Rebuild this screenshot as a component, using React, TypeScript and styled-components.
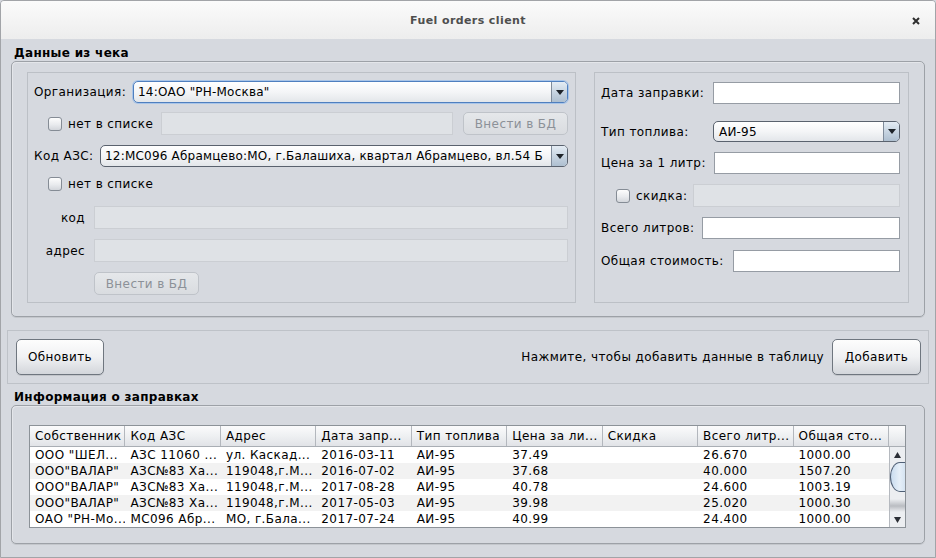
import React from 'react';
import styled, { createGlobalStyle, css } from 'styled-components';

const Global = createGlobalStyle`
  html, body { margin: 0; padding: 0; background: #d6d9df; }
  body { font-family: "DejaVu Sans", "Noto Sans", sans-serif; font-size: 12px; color: #000; letter-spacing: 0.4px; }
  * { box-sizing: border-box; }
`;

const Window = styled.div`
  width: 936px;
  height: 558px;
  border: 1px solid #a2a4a8;
  border-radius: 4px 4px 0 0;
  background: #d6d9df;
  display: flex;
  flex-direction: column;
  overflow: hidden;
`;

const TitleBar = styled.div`
  height: 38px;
  flex: none;
  background: linear-gradient(#fbfbfb, #ededed);
  display: grid;
  grid-template-columns: 1fr auto 1fr;
  align-items: center;
  font: bold 11px "DejaVu Sans", sans-serif;
  letter-spacing: 0.4px;
  color: #4e4e4e;
`;

const TitleText = styled.div`
  grid-column: 2;
  padding-top: 1px;
`;

const CloseBox = styled.div`
  grid-column: 3;
  justify-self: end;
  padding-right: 15px;
  display: flex;
  align-items: center;
  padding-top: 2px;
`;

const Body = styled.div`
  flex: 1;
  padding: 6px 6px 0 6px;
  display: flex;
  flex-direction: column;
`;

const SectionTitle = styled.div<{ $top?: number }>`
  height: 16px;
  line-height: 16px;
  padding-left: 7px;
  margin-top: ${p => p.$top ?? 0}px;
  font-weight: bold;
  font-size: 12px;
  letter-spacing: 0.3px;
`;

const TitledBox = styled.div<{ $pad: string; $h: number }>`
  margin: 0 4px;
  height: ${p => p.$h}px;
  border: 1px solid #9da1a7;
  border-radius: 5px;
  box-shadow: inset 1px 1px 0 #e4e6ea, 0 1px 0 #c4c7cc;
  padding: ${p => p.$pad};
  display: flex;
`;

const Panel = styled.div<{ $w: number; $pad: string }>`
  width: ${p => p.$w}px;
  flex: none;
  height: 231px;
  border: 1px solid #bcc0c6;
  padding: ${p => p.$pad};
  display: flex;
  flex-direction: column;
`;

const Spacer = styled.div<{ $w: number }>`
  width: ${p => p.$w}px;
  flex: none;
`;

const Row = styled.div<{ $h: number; $gap?: number; $indent?: number }>`
  height: ${p => p.$h}px;
  margin-top: ${p => p.$gap ?? 0}px;
  margin-left: ${p => p.$indent ?? 0}px;
  display: flex;
  align-items: center;
  flex: none;
`;

const Label = styled.div<{ $w: number; $right?: boolean }>`
  width: ${p => p.$w}px;
  flex: none;
  white-space: nowrap;
  text-align: ${p => (p.$right ? 'right' : 'left')};
  padding-right: ${p => (p.$right ? 9 : 0)}px;
`;

const CheckArea = styled.label<{ $w: number; $lead?: number }>`
  width: ${p => p.$w}px;
  padding-left: ${p => p.$lead ?? 0}px;
  flex: none;
  display: flex;
  align-items: center;
  gap: 6px;
  white-space: nowrap;
`;

const CheckBox = styled.span`
  width: 14px;
  height: 14px;
  flex: none;
  border: 1px solid #858c95;
  border-radius: 3px;
  background: linear-gradient(#fdfdfd, #e9ebee 55%, #d3d6db);
`;

const Field = styled.input`
  flex: 1;
  min-width: 0;
  height: 100%;
  margin: 0;
  padding: 0 4px;
  font: 12px "DejaVu Sans", sans-serif;
  background: #fff;
  border: 1px solid #969ca4;
  border-radius: 0;
  outline: none;
  &:disabled {
    background: #dfe2e6;
    border-color: #cbced3;
  }
`;

const Combo = styled.div<{ $focused?: boolean }>`
  flex: 1;
  min-width: 0;
  height: 100%;
  display: flex;
  border: 1px solid #5a626e;
  border-radius: 5px;
  overflow: hidden;
  background: linear-gradient(#ffffff, #f4f5f7 50%, #e3e6ea);
  ${p =>
    p.$focused &&
    css`
      border-color: #4f7fbf;
      box-shadow: 0 0 0 1px #a9c5e8;
    `}
`;

const ComboText = styled.div<{ $pad: number }>`
  flex: 1;
  min-width: 0;
  padding-left: ${p => p.$pad}px;
  display: flex;
  align-items: center;
  white-space: nowrap;
  overflow: hidden;
  letter-spacing: 0.2px;
`;

const ComboArrow = styled.div`
  width: 16px;
  flex: none;
  border-left: 1px solid #7f8b9a;
  background: linear-gradient(#e4ecf4, #c8d5e2 50%, #aebfd0);
  display: flex;
  align-items: center;
  justify-content: center;
`;

const Button = styled.button<{ $w: number; $h: number }>`
  width: ${p => p.$w}px;
  height: ${p => p.$h}px;
  flex: none;
  margin: 0;
  padding: 0;
  font: 12px "DejaVu Sans", sans-serif;
  letter-spacing: 0.4px;
  color: #000;
  border: 1px solid #6f767f;
  border-radius: 5px;
  background: linear-gradient(#fdfdfd, #f0f1f3 50%, #d3d6db);
  box-shadow: 0 1px 0 #c2c5ca;
  &:disabled {
    color: #8c9198;
    border-color: #bfc3c9;
    background: linear-gradient(#e5e7ea, #d9dce0);
    box-shadow: none;
  }
`;

const ActionBar = styled.div`
  margin-top: 13px;
  height: 54px;
  flex: none;
  border: 1px solid #bec2c8;
  padding: 8px 7px 8px 8px;
  display: flex;
  align-items: center;
`;

const Hint = styled.div`
  margin-left: auto;
  margin-right: 8px;
  white-space: nowrap;
`;

const Table = styled.div`
  flex: 1;
  height: 103px;
  border: 1px solid #8c9298;
  display: flex;
  flex-direction: column;
  background: #fff;
`;

const HeaderRow = styled.div`
  height: 21px;
  flex: none;
  display: grid;
  grid-template-columns: repeat(9, 1fr) 16px;
  border-bottom: 1px solid #a9aeb4;
  background: linear-gradient(#fbfbfc, #eef0f2 50%, #e1e3e7);
`;

const HeadCell = styled.div`
  border-right: 1px solid #b3b7bd;
  padding-left: 5px;
  display: flex;
  align-items: center;
  white-space: nowrap;
  overflow: hidden;
  &:last-child {
    border-right: none;
  }
`;

const BodyArea = styled.div`
  flex: 1;
  display: flex;
`;

const Rows = styled.div`
  flex: 1;
  display: flex;
  flex-direction: column;
`;

const DataRow = styled.div<{ $alt: boolean }>`
  height: 16px;
  display: grid;
  grid-template-columns: repeat(9, 1fr);
  background: ${p => (p.$alt ? '#f2f2f2' : '#ffffff')};
`;

const Cell = styled.div`
  padding-left: 5px;
  line-height: 16px;
  white-space: nowrap;
  overflow: hidden;
`;

const ScrollBar = styled.div`
  width: 16px;
  flex: none;
  border-left: 1px solid #b5b9bf;
  background: #eceef1;
  display: flex;
  flex-direction: column;
  align-items: flex-end;
`;

const ScrollArrow = styled.div`
  height: 15px;
  width: 15px;
  flex: none;
  display: flex;
  align-items: center;
  justify-content: center;
`;

const Thumb = styled.div`
  width: 15px;
  height: 30px;
  flex: none;
  border: 1px solid #4f5f75;
  border-right: none;
  border-radius: 10px 0 0 10px / 15px 0 0 15px;
  background: linear-gradient(90deg, #c9dcef, #e6eff8 60%, #d5e3f1);
`;

const TrackShade = styled.div`
  width: 15px;
  flex: 1;
  background: linear-gradient(#eceef1 0%, #eceef1 35%, #b9bcc1 70%, #eceef1 100%);
`;

const Up = () => (
  <svg width="7" height="6" viewBox="0 0 7 6">
    <polygon points="3.5,0 7,6 0,6" fill="#2b2f36" />
  </svg>
);
const Down = () => (
  <svg width="7" height="6" viewBox="0 0 7 6">
    <polygon points="0,0 7,0 3.5,6" fill="#2b2f36" />
  </svg>
);
const ComboTri = () => (
  <svg width="8" height="5" viewBox="0 0 8 5">
    <polygon points="0,0 8,0 4,5" fill="#1e2329" />
  </svg>
);

const headers = [
  'Собственник',
  'Код АЗС',
  'Адрес',
  'Дата запр...',
  'Тип топлива',
  'Цена за ли...',
  'Скидка',
  'Всего литр...',
  'Общая сто...',
];

const rows = [
  ['ООО "ШЕЛ...', 'АЗС 11060 ...', 'ул. Каскад...', '2016-03-11', 'АИ-95', '37.49', '', '26.670', '1000.00'],
  ['ООО"ВАЛАР"', 'АЗС№83 Ха...', '119048,г.М...', '2016-07-02', 'АИ-95', '37.68', '', '40.000', '1507.20'],
  ['ООО"ВАЛАР"', 'АЗС№83 Ха...', '119048,г.М...', '2017-08-28', 'АИ-95', '40.78', '', '24.600', '1003.19'],
  ['ООО"ВАЛАР"', 'АЗС№83 Ха...', '119048,г.М...', '2017-05-03', 'АИ-95', '39.98', '', '25.020', '1000.30'],
  ['ОАО "РН-Мо...', 'МС096 Абр...', 'МО, г.Бала...', '2017-07-24', 'АИ-95', '40.99', '', '24.400', '1000.00'],
];

export default function App() {
  return (
    <>
      <Global />
      <Window>
        <TitleBar>
          <TitleText>Fuel orders client</TitleText>
          <CloseBox>
            <svg width="8" height="8" viewBox="0 0 8 8">
              <path d="M1 1 L7 7 M7 1 L1 7" stroke="#2e2e2e" strokeWidth="2" />
            </svg>
          </CloseBox>
        </TitleBar>
        <Body>
          <SectionTitle>Данные из чека</SectionTitle>
          <TitledBox $h={256} $pad="10px 15px 13px 15px">
            <Panel $w={549} $pad="8px 7px 0 6px">
              <Row $h={22}>
                <Label $w={99}>Организация:</Label>
                <Combo $focused>
                  <ComboText $pad={4}>14:ОАО "РН-Москва"</ComboText>
                  <ComboArrow><ComboTri /></ComboArrow>
                </Combo>
              </Row>
              <Row $h={23} $gap={9} $indent={14}>
                <CheckArea $w={113}>
                  <CheckBox />
                  нет в списке
                </CheckArea>
                <Field disabled />
                <Spacer $w={10} />
                <Button $w={105} $h={23} disabled>Внести в БД</Button>
              </Row>
              <Row $h={22} $gap={10}>
                <Label $w={66}>Код АЗС:</Label>
                <Combo>
                  <ComboText $pad={4}>12:МС096 Абрамцево:МО, г.Балашиха, квартал Абрамцево, вл.54 Б</ComboText>
                  <ComboArrow><ComboTri /></ComboArrow>
                </Combo>
              </Row>
              <Row $h={16} $gap={9} $indent={14}>
                <CheckArea $w={113}>
                  <CheckBox />
                  нет в списке
                </CheckArea>
              </Row>
              <Row $h={23} $gap={14}>
                <Label $w={60} $right>код</Label>
                <Field disabled />
              </Row>
              <Row $h={23} $gap={10}>
                <Label $w={60} $right>адрес</Label>
                <Field disabled />
              </Row>
              <Row $h={23} $gap={10} $indent={60}>
                <Button $w={105} $h={23} disabled>Внести в БД</Button>
              </Row>
            </Panel>
            <Spacer $w={18} />
            <Panel $w={315} $pad="9px 8px 0 6px">
              <Row $h={22}>
                <Label $w={112}>Дата заправки:</Label>
                <Field />
              </Row>
              <Row $h={21} $gap={17}>
                <Label $w={112}>Тип топлива:</Label>
                <Combo>
                  <ComboText $pad={5}>АИ-95</ComboText>
                  <ComboArrow><ComboTri /></ComboArrow>
                </Combo>
              </Row>
              <Row $h={22} $gap={10}>
                <Label $w={113}>Цена за 1 литр:</Label>
                <Field />
              </Row>
              <Row $h={23} $gap={10}>
                <CheckArea $w={92} $lead={15}>
                  <CheckBox />
                  скидка:
                </CheckArea>
                <Field disabled />
              </Row>
              <Row $h={22} $gap={10}>
                <Label $w={101}>Всего литров:</Label>
                <Field />
              </Row>
              <Row $h={22} $gap={11}>
                <Label $w={132}>Общая стоимость:</Label>
                <Field />
              </Row>
            </Panel>
          </TitledBox>
          <ActionBar>
            <Button $w={88} $h={36}>Обновить</Button>
            <Hint>Нажмите, чтобы добавить данные в таблицу</Hint>
            <Button $w={89} $h={36}>Добавить</Button>
          </ActionBar>
          <SectionTitle $top={5}>Информация о заправках</SectionTitle>
          <TitledBox $h={139} $pad="19px 18px 15px 17px">
            <Table>
              <HeaderRow>
                {headers.map(h => (
                  <HeadCell key={h}>{h}</HeadCell>
                ))}
                <HeadCell />
              </HeaderRow>
              <BodyArea>
                <Rows>
                  {rows.map((r, i) => (
                    <DataRow key={i} $alt={i % 2 === 1}>
                      {r.map((c, j) => (
                        <Cell key={j}>{c}</Cell>
                      ))}
                    </DataRow>
                  ))}
                </Rows>
                <ScrollBar>
                  <ScrollArrow><Up /></ScrollArrow>
                  <Thumb />
                  <TrackShade />
                  <ScrollArrow><Down /></ScrollArrow>
                </ScrollBar>
              </BodyArea>
            </Table>
          </TitledBox>
        </Body>
      </Window>
    </>
  );
}
